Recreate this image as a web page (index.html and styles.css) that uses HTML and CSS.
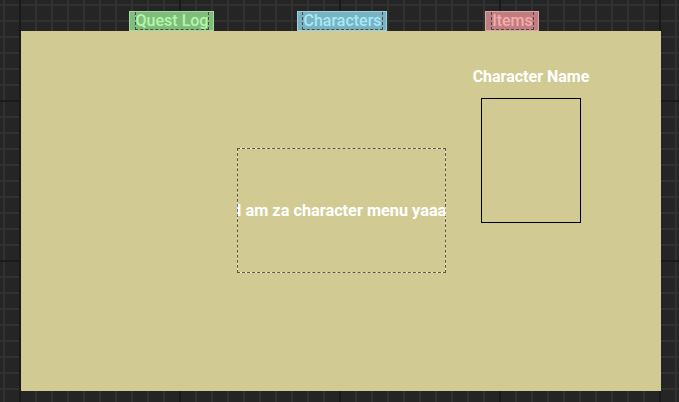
FILE: index.html
```html
<!DOCTYPE html>
<html>
<head>
<meta charset="utf-8">
<link rel="stylesheet" href="styles.css">
</head>
<body>
<div class="canvas">
  <nav class="tabs">
    <div class="tab tab-quest"><span class="tab-label">Quest Log</span></div>
    <div class="tab tab-chars"><span class="tab-label">Characters</span></div>
    <div class="tab tab-items"><span class="tab-label">Items</span></div>
  </nav>
  <main class="panel">
    <div class="menu-box"><span class="menu-text">I am za character menu yaaa</span></div>
    <section class="char-col">
      <h2 class="char-name">Character Name</h2>
      <div class="portrait"></div>
    </section>
  </main>
</div>
</body>
</html>
```
FILE: styles.css
```css
html, body {
  margin: 0;
  padding: 0;
}
body {
  width: 679px;
  height: 402px;
  overflow: hidden;
  font-family: Roboto, "Liberation Sans", sans-serif;
  background-color: #252525;
  background-image:
    linear-gradient(to right, #1a1a1a 0 2px, transparent 2px),
    linear-gradient(to bottom, #1a1a1a 0 2px, transparent 2px),
    linear-gradient(to right, #313131 0 2px, transparent 2px),
    linear-gradient(to bottom, #313131 0 2px, transparent 2px);
  background-size: 160px 160px, 160px 160px, 16px 16px, 16px 16px;
  background-position: 19px 0, 0 100px, 3px 0, 0 4px;
}
.canvas {
  padding: 11px 0 0 21px;
}
.tabs {
  display: flex;
  height: 20px;
  padding-left: 108px;
}
.tab {
  box-sizing: border-box;
  height: 20px;
  border: 1px solid;
  display: flex;
  align-items: stretch;
  justify-content: center;
  padding: 0 4px 0 5px;
}
.tab-label {
  display: flex;
  align-items: center;
  padding-top: 1px;
  font-size: 16px;
  font-weight: 500;
  line-height: 18px;
  border: 1px dashed #4a4a4a;
  border-top: 0;
  white-space: nowrap;
}
.tab-quest {
  width: 85px;
  background: #80bd7c;
  border-color: #a6d9a2;
  color: #b2f7a8;
}
.tab-chars {
  width: 90px;
  margin-left: 83px;
  background: #77b3c3;
  border-color: #a0d2de;
  color: #a8e8f6;
}
.tab-items {
  width: 54px;
  margin-left: 98px;
  background: #c07e80;
  border-color: #dba6a8;
  color: #f7abab;
}
.panel {
  width: 640px;
  height: 360px;
  background: #d1cb93;
  display: flex;
  align-items: flex-start;
  padding-left: 216px;
  box-sizing: border-box;
}
.menu-box {
  box-sizing: border-box;
  width: 209px;
  height: 125px;
  margin-top: 117px;
  border: 1px dashed #5e5a45;
  background: linear-gradient(#d1cb93, #d1cb93) padding-box, #ece8cf border-box;
  display: flex;
  align-items: center;
  justify-content: center;
}
.menu-text {
  color: #ffffff;
  font-size: 16.3px;
  font-weight: 700;
  white-space: nowrap;
}
.char-col {
  width: 140px;
  margin-left: 15px;
  padding-top: 36px;
  display: flex;
  flex-direction: column;
  align-items: center;
}
.char-name {
  margin: 0;
  font-size: 16px;
  line-height: 19px;
  font-weight: 700;
  color: #ffffff;
  white-space: nowrap;
}
.portrait {
  box-sizing: border-box;
  width: 100px;
  height: 125px;
  margin-top: 12px;
  border: 1px solid #000000;
}
```
